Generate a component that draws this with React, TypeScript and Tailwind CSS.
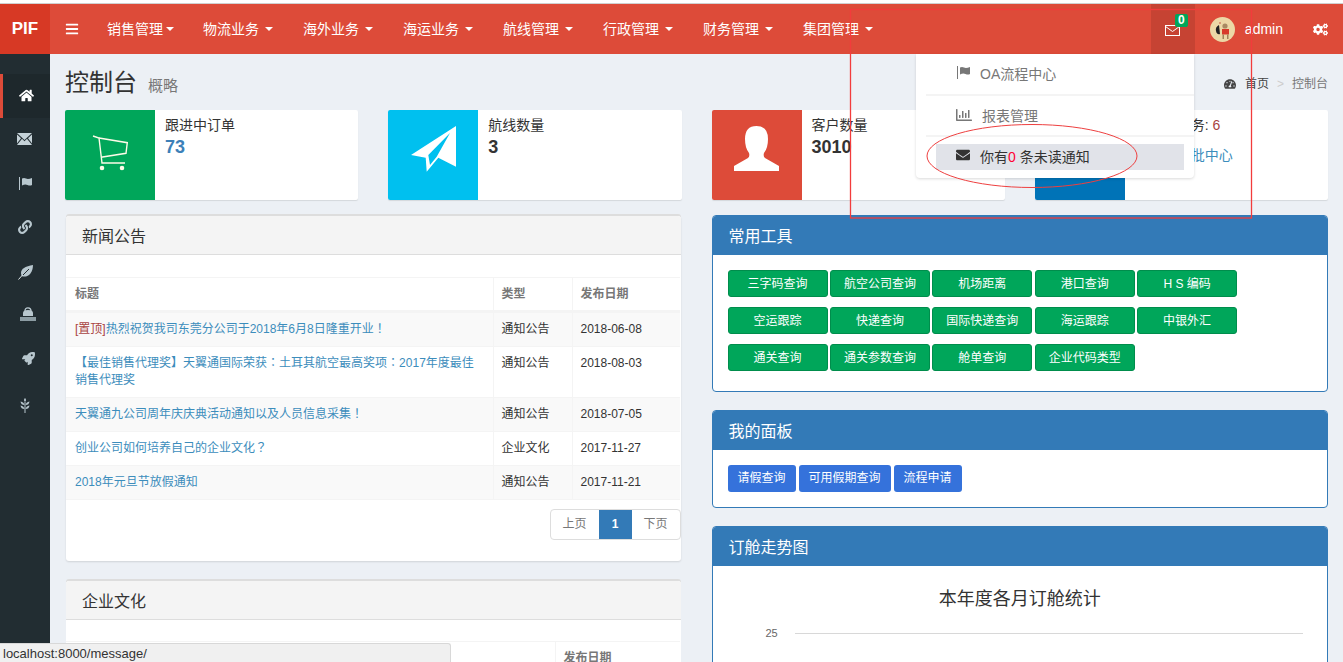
import React from "react";
import { FaHome, FaLink, FaRocket, FaBars, FaCogs, FaTachometerAlt, FaRegChartBar, FaEnvelope } from "react-icons/fa";

const font = { fontFamily: '"Liberation Sans","Noto Sans CJK SC",sans-serif' };

function Caret() {
  return <span className="inline-block w-0 h-0 border-x-[4px] border-x-transparent border-t-[4px] border-t-white align-middle" />;
}

function P({ children }: { children: React.ReactNode }) {
  return <span className="font-['Noto_Sans_CJK_TC'] leading-[0]">{children}</span>;
}

function FlagIcon({ className }: { className?: string }) {
  return (
    <svg width="13" height="13" viewBox="0 0 13 13" fill="currentColor" className={className} aria-hidden="true">
      <rect x="0" y="0" width="1" height="13" />
      <path d="M3 1.5 Q5 0.5 7 1.5 T13 1 V8 Q11 9 8.5 8 T3 8.5 Z" />
    </svg>
  );
}

function MailSolid() {
  return (
    <svg width="15" height="12" viewBox="0 0 15 12" fill="#c5d2d8" aria-hidden="true">
      <path d="M0 0H15L7.5 7Z" />
      <path d="M0 12H15L10 5.8 7.5 8.3 5 5.8Z" />
      <path d="M0 1.5L4 5.2 0 10.5Z" />
      <path d="M15 1.5L11 5.2 15 10.5Z" />
    </svg>
  );
}

function LeafIcon() {
  return (
    <svg width="15" height="15" viewBox="0 0 15 15" aria-hidden="true">
      <path d="M3.5 10.5C1 4 8 1 15 0C15 7 11 12.5 4.5 11.5Z" fill="#b8c7ce" />
      <path d="M0.5 14.5L4.5 10" stroke="#dfe7ea" strokeWidth="1" />
      <path d="M5 10L11 4" stroke="#222d32" strokeWidth="1" />
    </svg>
  );
}

function StampIcon() {
  return (
    <svg width="16" height="14" viewBox="0 0 16 14" aria-hidden="true">
      <path d="M5 4Q5 0.8 8 0.8Q11 0.8 11 4" fill="none" stroke="#b8c7ce" strokeWidth="1.3" />
      <path d="M3 9V6Q3 3 8 3Q13 3 13 6V9Z" fill="#b8c7ce" />
      <rect x="0" y="10" width="16" height="4" fill="#8c9ca3" />
    </svg>
  );
}

function PlantIcon() {
  return (
    <svg width="10" height="15" viewBox="0 0 10 15" fill="#b8c7ce" aria-hidden="true">
      <path d="M5 0Q7 2 5 4Q3 2 5 0Z" />
      <path d="M0.5 3.5Q4 4 4.5 7Q1 7 0.5 3.5Z" />
      <path d="M9.5 3.5Q6 4 5.5 7Q9 7 9.5 3.5Z" />
      <path d="M0.5 7.5Q4 8 4.5 11Q1 11 0.5 7.5Z" />
      <path d="M9.5 7.5Q6 8 5.5 11Q9 11 9.5 7.5Z" />
      <rect x="4.5" y="4" width="1" height="11" />
    </svg>
  );
}

function CartIcon() {
  return (
    <svg width="90" height="90" viewBox="0 0 90 90" fill="none" stroke="#fdfbe8" strokeWidth="1.4" aria-hidden="true">
      <path d="M28 26L34 28L37 53H60" />
      <path d="M34 28L62.3 32.7L61 43.3L36 47.3" />
      <circle cx="37" cy="58" r="1.6" fill="#fdfbe8" />
      <circle cx="57" cy="58" r="1.6" fill="#fdfbe8" />
    </svg>
  );
}

function PlaneIcon() {
  return (
    <svg width="90" height="90" viewBox="0 0 90 90" aria-hidden="true">
      <path fillRule="evenodd" fill="#fff" d="M68 16L23 45L37.7 47.7L38.7 61.7L50.3 47.7L68 56.7ZM62 23L40.3 45L42 55L48.7 46.7Z" />
    </svg>
  );
}

function PersonIcon() {
  return (
    <svg width="90" height="90" viewBox="0 0 90 90" aria-hidden="true">
      <path fill="#fff" d="M22 61L22 56L36 48Q38 46 37 43Q33 38 33 29Q33 16 44.5 16Q56 16 56 29Q56 38 52 43Q51 46 53 48L67 56L67 61Z" />
    </svg>
  );
}

const navs = ["物流业务", "海外业务", "海运业务", "航线管理", "行政管理", "财务管理", "集团管理"];

function Navbar() {
  return (
    <div className="h-[50px] shrink-0 flex bg-[#dd4b39] text-white text-sm">
      <div className="w-[50px] bg-[#d73925] flex items-center justify-center font-bold text-[17px]">PIF</div>
      <div className="w-[42px] flex items-center pl-[15px]"><FaBars size={14} /></div>
      <div className="flex items-center px-[15px] w-[96px] whitespace-nowrap">销售管理<span className="ml-[3px] flex"><Caret /></span></div>
      {navs.map((n) => (
        <div key={n} className="flex items-center px-[15px] w-[100px] whitespace-nowrap">{n}<span className="ml-[6px] flex"><Caret /></span></div>
      ))}
      <div className="flex-1" />
      <div className="w-[44px] bg-[#c64333] relative flex items-center justify-center">
        <svg width="15" height="11" viewBox="0 0 15 11" fill="none" stroke="#fff" strokeWidth="1" className="mt-[2px]" aria-hidden="true">
          <rect x="0.5" y="0.5" width="14" height="10" />
          <path d="M0.5 1.5L7.5 6.5L14.5 1.5" />
        </svg>
        <span className="absolute left-[24px] top-[10px] w-[13px] h-[13px] bg-[#00a65a] rounded-[2px] text-xs font-bold leading-[13px] text-center">0</span>
      </div>
      <div className="flex items-center ml-[15px]">
        <svg width="25" height="25" viewBox="0 0 25 25" aria-hidden="true">
          <circle cx="12.5" cy="12.5" r="12.5" fill="#ecd8a6" />
          <path d="M9 8Q5 10 6 14Q7 18 10 17Z" fill="#222" />
          <circle cx="15" cy="9" r="2.6" fill="#a98a62" />
          <rect x="12" y="12" width="7" height="5.5" fill="#d83a2a" />
          <rect x="12.5" y="17.5" width="1.5" height="4.5" fill="#a08058" />
          <rect x="17" y="17.5" width="1.5" height="4.5" fill="#a08058" />
          <rect x="9.5" y="5" width="1" height="2" fill="#c85a4a" />
        </svg>
        <span className="ml-[10px]">admin</span>
      </div>
      <div className="flex items-center ml-[30px] mr-[15px]"><FaCogs size={15} /></div>
    </div>
  );
}

function Sidebar() {
  return (
    <div className="w-[50px] shrink-0 bg-[#222d32] pt-[20px] text-[#b8c7ce]">
      <div className="h-[44px] bg-[#1e282c] border-l-[3px] border-[#dd4b39] flex items-center justify-center text-white pr-[1px] pb-[2px]">
        <FaHome size={15} />
      </div>
      <div className="h-[44px] flex items-center justify-center pr-[1px] pb-[2px]"><MailSolid /></div>
      <div className="h-[44px] flex items-center justify-center pb-[1px]"><FlagIcon /></div>
      <div className="h-[44px] flex items-center justify-center pb-[2px]"><FaLink size={14} /></div>
      <div className="h-[44px] flex items-center justify-center"><LeafIcon /></div>
      <div className="h-[44px] flex items-center justify-center pb-[4px] pl-[6px]"><StampIcon /></div>
      <div className="h-[44px] flex items-center justify-center pb-[3px] pl-[6px]"><FaRocket size={13} /></div>
      <div className="h-[44px] flex items-center justify-center pt-[2px] pr-[1px]"><PlantIcon /></div>
    </div>
  );
}

function InfoBox({ bg, icon, title, value, valueClass }: { bg: string; icon: React.ReactNode; title: React.ReactNode; value: string; valueClass: string }) {
  return (
    <div className="h-[90px] bg-white rounded-[2px] shadow-[0_1px_1px_rgba(0,0,0,0.1)] flex overflow-hidden">
      <div className={`w-[90px] shrink-0 flex items-center justify-center ${bg}`}>{icon}</div>
      <div className="pl-[10px] pt-[5px]">
        <div className="text-sm leading-[20px] text-[#333] whitespace-nowrap">{title}</div>
        <div className={`leading-[24px] whitespace-nowrap ${valueClass}`}>{value}</div>
      </div>
    </div>
  );
}

function GrayHead({ children }: { children: React.ReactNode }) {
  return (
    <div className="h-[39px] bg-[#f4f4f4] border-b border-[#ddd] pl-[16px] text-base leading-[42px] text-[#333] rounded-t-[3px]">{children}</div>
  );
}

function BlueHead({ children }: { children: React.ReactNode }) {
  return <div className="h-[39px] bg-[#337ab7] text-white text-base leading-[42px] pl-[16px]">{children}</div>;
}

const rows: [React.ReactNode, string, string][] = [
  [<><span className="text-[#a94442]">[置顶]</span>热烈祝贺我司东莞分公司于2018年6月8日隆重开业<P>！</P></>, "通知公告", "2018-06-08"],
  [<><P>【</P>最佳销售代理奖<P>】</P>天翼通国际荣获<P>：</P>土耳其航空最高奖项<P>：</P>2017年度最佳销售代理奖</>, "通知公告", "2018-08-03"],
  [<>天翼通九公司周年庆庆典活动通知以及人员信息采集<P>！</P></>, "通知公告", "2018-07-05"],
  [<>创业公司如何培养自己的企业文化<P>？</P></>, "企业文化", "2017-11-27"],
  ["2018年元旦节放假通知", "通知公告", "2017-11-21"],
];

function NewsPanel() {
  return (
    <div className="mx-px h-[345px] mt-px bg-white rounded-[3px] shadow-[0_-2px_0_#ddd,0_1px_2px_rgba(0,0,0,0.12)]">
      <GrayHead>新闻公告</GrayHead>
      <div className="pt-[22px]">
        <table className="w-[614px] table-fixed border-collapse text-xs leading-[17px]">
          <colgroup><col className="w-[427px]" /><col className="w-[79px]" /><col className="w-[108px]" /></colgroup>
          <thead>
            <tr className="h-[34px] border-t border-b-[3px] border-[#f4f4f4] text-[#777]">
              <th className="pl-[9px] pr-[8px] font-bold text-left border-r border-[#f4f4f4]">标题</th>
              <th className="px-[8px] font-bold text-left border-r border-[#f4f4f4]">类型</th>
              <th className="px-[8px] font-bold text-left">发布日期</th>
            </tr>
          </thead>
          <tbody>
            {rows.map((r, i) => (
              <tr key={i} className={`border-b border-[#f4f4f4] ${i % 2 === 0 ? "bg-[#f9f9f9]" : "bg-white"}`}>
                <td className="py-[8px] pl-[9px] pr-[8px] align-top text-[#3c8dbc] border-r border-[#f4f4f4]">{r[0]}</td>
                <td className="p-[8px] align-top text-[#333] border-r border-[#f4f4f4]">{r[1]}</td>
                <td className="p-[8px] align-top text-[#333]">{r[2]}</td>
              </tr>
            ))}
          </tbody>
        </table>
        <div className="flex justify-end mt-[9px] text-xs">
          <div className="flex h-[31px] border border-[#ddd] rounded-[4px] overflow-hidden leading-[29px] text-center text-[#777]">
            <span className="w-[48px]">上页</span>
            <span className="w-[33px] bg-[#337ab7] text-white font-bold">1</span>
            <span className="w-[48px]">下页</span>
          </div>
        </div>
      </div>
    </div>
  );
}

function CulturePanel() {
  return (
    <div className="mx-px mt-[20px] bg-white rounded-[3px] shadow-[0_-2px_0_#ddd]">
      <GrayHead>企业文化</GrayHead>
      <div className="pt-[21px]">
        <table className="w-[614px] table-fixed border-collapse text-xs leading-[17px] text-[#777]">
          <colgroup><col className="w-[489px]" /><col className="w-[125px]" /></colgroup>
          <thead>
            <tr className="h-[34px] border-t border-[#f4f4f4]">
              <th className="px-[8px] font-bold text-left border-r border-[#f4f4f4]">标题</th>
              <th className="px-[8px] font-bold text-left">发布日期</th>
            </tr>
          </thead>
        </table>
      </div>
    </div>
  );
}

const tools = ["三字码查询", "航空公司查询", "机场距离", "港口查询", "H S 编码", "空运跟踪", "快递查询", "国际快递查询", "海运跟踪", "中银外汇", "通关查询", "通关参数查询", "舱单查询", "企业代码类型"];

function RightCol() {
  return (
    <div>
      <div className="border border-[#337ab7] rounded-[4px] overflow-hidden bg-white h-[177px]">
        <BlueHead>常用工具</BlueHead>
        <div className="flex flex-wrap w-[530px] gap-x-[2.4px] gap-y-[10px] pt-[15px] pl-[15px]">
          {tools.map((t) => (
            <div key={t} className="w-[100px] h-[27px] bg-[#00a65a] border border-[#008d4c] rounded-[3px] text-white text-xs text-center leading-[26px]">{t}</div>
          ))}
        </div>
      </div>
      <div className="mt-[18px] border border-[#337ab7] rounded-[4px] overflow-hidden bg-white h-[98px]">
        <BlueHead>我的面板</BlueHead>
        <div className="flex pt-[15px] pl-[15px] text-white text-xs text-center leading-[26px]">
          <div className="w-[68px] h-[27px] bg-[#3572db] rounded-[3px] mr-[3px]">请假查询</div>
          <div className="w-[92px] h-[27px] bg-[#3572db] rounded-[3px] mr-[3px]">可用假期查询</div>
          <div className="w-[68px] h-[27px] bg-[#3572db] rounded-[3px]">流程申请</div>
        </div>
      </div>
      <div className="mt-[18px] border border-[#337ab7] rounded-[4px] overflow-hidden bg-white h-[300px]">
        <BlueHead>订舱走势图</BlueHead>
        <div className="text-center text-lg leading-[24px] text-[#333] mt-[21px]">本年度各月订舱统计</div>
        <div className="flex items-center mt-[15px] pl-[53px] pr-[24px] text-[11px] leading-[14px] text-[#666]">
          <span className="w-[29px]">25</span>
          <div className="flex-1 h-px bg-[#d8d8d8]" />
        </div>
      </div>
    </div>
  );
}

function Dropdown() {
  return (
    <div className="absolute left-[916px] top-[54px] w-[278px] h-[124px] bg-white rounded-b-[4px] shadow-[0_1px_3px_rgba(0,0,0,0.15)] text-sm text-[#777]">
      <div className="h-[42px] ml-[10px] border-b-2 border-[#f4f4f4] flex items-center pl-[31px]">
        <FlagIcon className="mr-[10px] -mt-[3px]" /><span>OA流程中心</span>
      </div>
      <div className="h-[41px] ml-[10px] border-b-2 border-[#f4f4f4] flex items-center pl-[30px] pt-[1px]">
        <FaRegChartBar size={16} className="mr-[10px] -mt-[3px]" /><span>报表管理</span>
      </div>
      <div className="h-[26px] mt-[7px] mr-[10px] ml-[20px] bg-[#e1e3e9] flex items-center pl-[20px] text-[#333] whitespace-pre">
        <FaEnvelope size={14} className="mr-[10px] -mt-[4px]" /><span>你有<span className="text-[#ff0033]">0</span> 条未读通知</span>
      </div>
    </div>
  );
}

function Annotations() {
  return (
    <svg className="absolute left-0 top-0 pointer-events-none" width="1343" height="662" aria-hidden="true">
      <rect x="850.5" y="9.5" width="401" height="208.5" fill="none" stroke="#f23c3c" strokeWidth="1.3" />
      <ellipse cx="1032" cy="156" rx="105" ry="31.5" fill="none" stroke="#ee4040" strokeWidth="1" />
    </svg>
  );
}

export default function App() {
  return (
    <div className="relative w-[1343px] h-[662px] overflow-hidden flex flex-col bg-[#ecf0f5]" style={font}>
      <div className="h-[4px] shrink-0 bg-white border-b border-[#d0d0d0]" />
      <Navbar />
      <div className="flex-1 flex min-h-0">
        <Sidebar />
        <div className="flex-1 min-w-0 px-[15px]">
          <div className="h-[56px] flex items-start justify-between">
            <div className="flex items-baseline pt-[13px] text-[#333]">
              <span className="text-2xl leading-[32px]">控制台</span>
              <span className="ml-[11px] text-[15px] text-[#777]">概略</span>
            </div>
            <div className="flex items-center text-xs text-[#444] pt-[22px]">
              <FaTachometerAlt size={12} className="mr-[9px]" />
              <span>首页</span>
              <span className="mx-[8px] text-[#ccc]">&gt;</span>
              <span className="text-[#777]">控制台</span>
            </div>
          </div>
          <div className="grid grid-cols-4 gap-x-[30px]">
            <InfoBox bg="bg-[#00a65a]" icon={<CartIcon />} title="跟进中订单" value="73" valueClass="text-lg font-bold text-[#3c80b8]" />
            <InfoBox bg="bg-[#00c0ef]" icon={<PlaneIcon />} title="航线数量" value="3" valueClass="text-lg font-bold text-[#333]" />
            <InfoBox bg="bg-[#dd4b39]" icon={<PersonIcon />} title="客户数量" value="3010" valueClass="text-lg font-bold text-[#333]" />
            <InfoBox bg="bg-[#0073b7]" icon={<span />} title={<>待审批任务: <span className="text-[#a94442]">6</span></>} value="去流程审批中心" valueClass="text-sm mt-[8px] text-[#3c8dbc]" />
          </div>
          <div className="grid grid-cols-2 gap-x-[30px] mt-[15px]">
            <div>
              <NewsPanel />
              <CulturePanel />
            </div>
            <RightCol />
          </div>
        </div>
      </div>
      <Dropdown />
      <Annotations />
      <div className="absolute left-0 top-[643px] w-[451px] h-[19px] bg-[#f0f0f0] border-t border-r border-[#d8d8d8] rounded-tr-[3px] pl-[3px] text-[13px] leading-[20px] text-[#333]">localhost:8000/message/</div>
    </div>
  );
}
